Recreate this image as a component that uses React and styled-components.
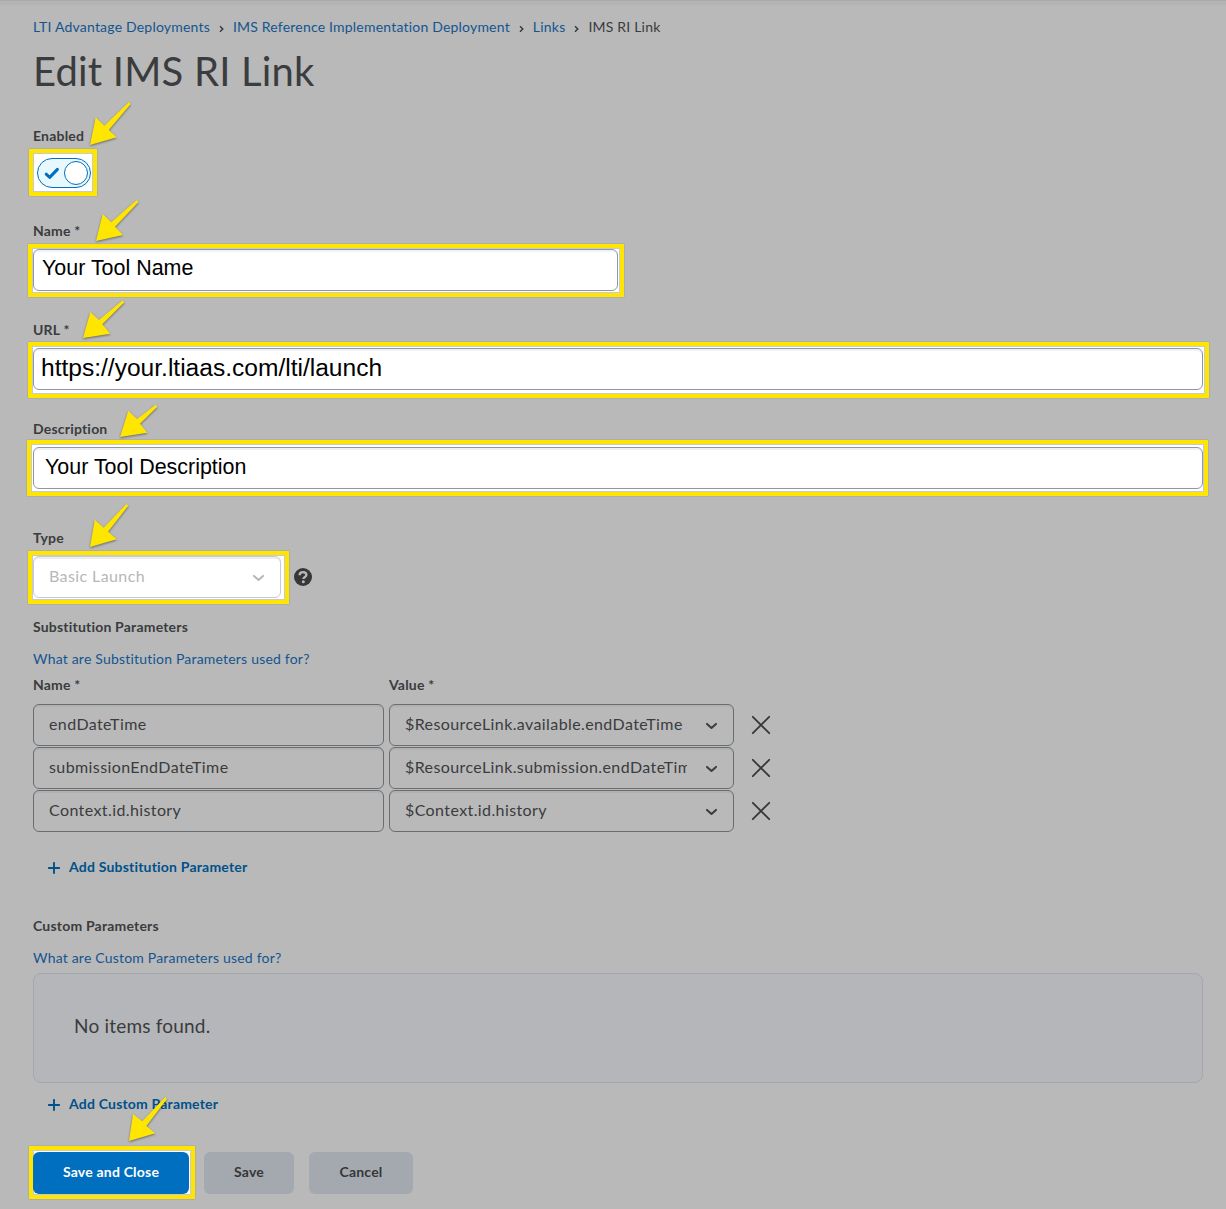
import { useState } from "react";
import styled, { createGlobalStyle } from "styled-components";

const crumbs = ["LTI Advantage Deployments", "IMS Reference Implementation Deployment", "Links"];

const initialParams = [
  { name: "endDateTime", value: "$ResourceLink.available.endDateTime" },
  { name: "submissionEndDateTime", value: "$ResourceLink.submission.endDateTime" },
  { name: "Context.id.history", value: "$Context.id.history" },
];

// arrow outlines, drawn from the tip at 0,0
const arrows = {
  enabled: "0,0 5.7,-27.7 14.3,-19.3 39,-43 40.7,-41 18.7,-15 26.7,-7.7",
  name: "0,0 6.7,-27 15.3,-18.7 40.7,-41 42.3,-38.7 19,-14.3 27,-6",
  url: "0,0 7.3,-26 16,-18 39.7,-37.7 41.3,-35.7 19.3,-13.7 27.3,-4.3",
  description: "0,0 8.3,-26.3 17,-18 35.7,-32.3 37.3,-30.3 20,-13.3 27.3,-4.3",
  type: "0,0 4.7,-27.3 13.7,-19.3 36.3,-43 38.3,-41.3 18,-15.3 26.7,-7.7",
  save: "0,0 4,-27 13.3,-19.7 36.3,-44 38,-42 17.3,-15 26.3,-7.7",
};

const Chevron = () => (
  <svg width="13" height="8" viewBox="0 0 13 8" fill="none" stroke="currentColor">
    <path d="M2 1.900 6.500 6l4.500-4.100" strokeWidth="2" strokeLinecap="round" strokeLinejoin="round" />
  </svg>
);

const Plus = () => (
  <svg width="12" height="12" viewBox="0 0 12 12" fill="none" stroke="currentColor">
    <path d="M6 .9v10.200M.9 6h10.200" strokeWidth="1.900" strokeLinecap="round" />
  </svg>
);

const Highlight = ({ arrow, tip, frame, children }) => (
  <Spotlight>
    <Frame $inset={frame} />
    <Content>{children}</Content>
    <Arrow $tip={tip} width="44" height="46" viewBox="0 -46 44 46">
      <polygon points={arrows[arrow]} fill="#ffe600" />
    </Arrow>
  </Spotlight>
);

const App = () => {
  const [params, setParams] = useState(initialParams);

  const removeParam = (name) => setParams(params.filter((p) => p.name !== name));

  return (
    <>
      <GlobalStyle />
      <Page>
        <Breadcrumbs>
          {crumbs.map((crumb) => (
            <Crumb key={crumb}>
              <Link>{crumb}</Link>
              <svg width="5" height="8" viewBox="0 0 5 8" fill="none" stroke="#353738">
                <path d="M1 1.300 3.800 4 1 6.700" strokeWidth="1.400" />
              </svg>
            </Crumb>
          ))}
          <span>IMS RI Link</span>
        </Breadcrumbs>
        <Title>Edit IMS RI Link</Title>

        <Field $top={33} $gap={13} $width={58} $indent={4}>
          <Label>Enabled</Label>
          <Highlight arrow="enabled" tip={[53.3, -12.7]} frame="-9px -6px -8px -8px">
            <Toggle>
              <svg width="16" height="13" viewBox="0 0 16 13" fill="none" stroke="#006fbf">
                <path d="M2.200 7.200 5.700 10.400 13.400 2.400" strokeWidth="3" strokeLinecap="round" strokeLinejoin="round" />
              </svg>
              <Knob />
            </Toggle>
          </Highlight>
        </Field>

        <Field $top={34} $gap={9} $width={585}>
          <Label>Name *</Label>
          <Highlight arrow="name" tip={[63.3, -7.7]} frame="-5px -6px -6px -5px">
            <TextBox $size={21.45} $pad={8} $lift={3}>Your Tool Name</TextBox>
          </Highlight>
        </Field>

        <Field $top={30} $gap={9}>
          <Label>URL *</Label>
          <Highlight arrow="url" tip={[50.3, -10]} frame="-6px -6px -8px -5px">
            <TextBox $size={24.55} $pad={7} $lift={3}>https://your.ltiaas.com/lti/launch</TextBox>
          </Highlight>
        </Field>

        <Field $top={30} $gap={9}>
          <Label>Description</Label>
          <Highlight arrow="description" tip={[86.7, -10.3]} frame="-7px -5px -7px -6px">
            <TextBox $size={21.45} $pad={11} $lift={1}>Your Tool Description</TextBox>
          </Highlight>
        </Field>

        <Field $top={40} $gap={9}>
          <Label>Type</Label>
          <TypeRow>
            <Highlight arrow="type" tip={[57.3, -9.3]} frame="-5px -8px -6px -5px">
              <Select $disabled $width={248}>
                <SelectText>Basic Launch</SelectText>
                <Chevron />
              </Select>
            </Highlight>
            <svg width="18" height="18" viewBox="0 0 18 18" fill="none">
              <circle cx="9" cy="9" r="9" fill="#353738" />
              <path d="M5.600 7.300c0-1.900 1.400-3.100 3.400-3.100s3.400 1.100 3.400 2.800c0 2.100-3 2-3 4.100" stroke="#b9b9b9" strokeWidth="2.300" />
              <circle cx="9.300" cy="13.700" r="1.500" fill="#b9b9b9" />
            </svg>
          </TypeRow>
        </Field>

        <Section $top={20}>
          <Label>Substitution Parameters</Label>
          <HelpLink>What are Substitution Parameters used for?</HelpLink>
          <ParamHeader>
            <Label>Name *</Label>
            <Label>Value *</Label>
          </ParamHeader>
          <ParamList>
            {params.map((param) => (
              <ParamRow key={param.name}>
                <ParamName>{param.name}</ParamName>
                <Select $width={345}>
                  <SelectText>{param.value}</SelectText>
                  <Chevron />
                </Select>
                <RemoveButton onClick={() => removeParam(param.name)}>
                  <svg width="20" height="20" viewBox="0 0 20 20" fill="none" stroke="#353738">
                    <path d="M1.800 1.800l16.400 16.400M18.200 1.800l-16.400 16.400" strokeWidth="1.800" strokeLinecap="round" />
                  </svg>
                </RemoveButton>
              </ParamRow>
            ))}
          </ParamList>
          <AddButton $top={24}>
            <Plus />
            Add Substitution Parameter
          </AddButton>
        </Section>

        <Section $top={39}>
          <Label>Custom Parameters</Label>
          <HelpLink>What are Custom Parameters used for?</HelpLink>
          <EmptyBox>No items found.</EmptyBox>
          <AddButton $top={10}>
            <Plus />
            Add Custom Parameter
          </AddButton>
        </Section>

        <Footer>
          <Highlight arrow="save" tip={[96.3, -11]} frame="-6px -6px -5px -4px">
            <Button $primary $width={156}>Save and Close</Button>
          </Highlight>
          <Button $width={90}>Save</Button>
          <Button $width={104}>Cancel</Button>
        </Footer>
      </Page>
    </>
  );
};

export default App;

const GlobalStyle = createGlobalStyle`
  * {
    box-sizing: border-box;
  }

  body {
    margin: 0;
    background: #b9b9b9;
    color: #3a3c3e;
    font-family: Lato, "Liberation Sans", sans-serif;
    font-size: 14px;
  }

  svg {
    flex-shrink: 0;
  }
`;

const Page = styled.main`
  min-height: 1209px;
  padding: 15px 23px 0 33px;
  border-top: 1px solid #a9a9a9;
  background: linear-gradient(#b4b4b4 4px, #b9b9b9 4px);
`;

const Breadcrumbs = styled.nav`
  display: flex;
  line-height: 22px;
  letter-spacing: 0.2px;
`;

const Crumb = styled.span`
  display: flex;
  align-items: center;

  svg {
    margin: 3px 9px 0;
  }
`;

const Link = styled.a`
  color: #14558f;
  cursor: pointer;
`;

const Title = styled.h1`
  height: 48px;
  margin: 8px 0 0;
  font-size: 40px;
  font-weight: 400;
  line-height: 50px;
  letter-spacing: 0.2px;
`;

const Field = styled.div`
  display: flex;
  flex-direction: column;
  gap: ${({ $gap }) => $gap}px;
  margin-top: ${({ $top }) => $top}px;
  width: ${({ $width }) => ($width ? `${$width}px` : "auto")};

  > div {
    margin-left: ${({ $indent }) => $indent || 0}px;
  }
`;

const Label = styled.span`
  font-weight: 700;
  line-height: 18px;
  letter-spacing: 0.2px;
`;

const Spotlight = styled.div`
  position: relative;
`;

const Frame = styled.div`
  position: absolute;
  inset: ${({ $inset }) => $inset};
  border: 4px solid #ffe600;
  background: #fff;
  box-shadow: inset 0 0 0 1px #c9c9d2, 0 0 1px rgba(0, 0, 0, 0.35);
`;

const Content = styled.div`
  position: relative;
`;

const Arrow = styled.svg`
  position: absolute;
  left: ${({ $tip }) => $tip[0]}px;
  top: ${({ $tip }) => $tip[1] - 46}px;
  overflow: visible;
  filter: drop-shadow(0 1px 1px rgba(0, 0, 0, 0.45));
`;

const Toggle = styled.div`
  display: flex;
  align-items: center;
  justify-content: space-between;
  width: 54px;
  height: 30px;
  padding: 0 2px 0 6px;
  border: 1px solid #006fbf;
  border-radius: 15px;
  background: #e8f8ff;
`;

const Knob = styled.span`
  width: 24px;
  height: 24px;
  border: 1px solid #006fbf;
  border-radius: 50%;
  background: #fff;
`;

const TextBox = styled.div`
  height: 42px;
  padding: 0 ${({ $pad }) => $pad}px ${({ $lift }) => $lift}px;
  border: 1px solid #90989d;
  border-radius: 6px;
  background: #fff;
  box-shadow: inset 0 2px 0 rgba(181, 189, 194, 0.2);
  color: #000;
  font-family: "Liberation Sans", Arial, sans-serif;
  font-size: ${({ $size }) => $size}px;
  line-height: ${({ $lift }) => 40 - $lift}px;
`;

const TypeRow = styled.div`
  display: flex;
  align-items: center;
  gap: 13px;
`;

const Select = styled.div`
  display: flex;
  align-items: center;
  justify-content: space-between;
  width: ${({ $width }) => $width}px;
  height: 42px;
  padding: 0 15px;
  border: 1px solid ${({ $disabled }) => ($disabled ? "#c7cbce" : "#686e72")};
  border-radius: 6px;
  color: ${({ $disabled }) => ($disabled ? "#b6b7b8" : "#3a3c3e")};
  font-size: 16px;
  letter-spacing: 0.4px;
  box-shadow: inset 0 2px 0 rgba(131, 137, 141, 0.15);

  svg {
    margin-top: 2px;
  }
`;

const SelectText = styled.span`
  max-width: 282px;
  padding-bottom: 3px;
  overflow: hidden;
  white-space: nowrap;
`;

const Section = styled.section`
  display: flex;
  flex-direction: column;
  margin-top: ${({ $top }) => $top}px;
`;

const HelpLink = styled(Link)`
  margin-top: 12px;
  line-height: 22px;
  letter-spacing: 0.2px;
`;

const ParamHeader = styled.div`
  display: grid;
  grid-template-columns: 351px 345px;
  gap: 5px;
  margin-top: 6px;
`;

const ParamList = styled.div`
  display: flex;
  flex-direction: column;
  gap: 1px;
  margin-top: 10px;
`;

const ParamRow = styled.div`
  display: flex;
  align-items: center;
  gap: 5px;
`;

const ParamName = styled.div`
  width: 351px;
  height: 42px;
  padding: 0 15px;
  border: 1px solid #686e72;
  border-radius: 6px;
  box-shadow: inset 0 2px 0 rgba(131, 137, 141, 0.15);
  font-size: 16px;
  line-height: 38px;
  letter-spacing: 0.4px;
`;

const RemoveButton = styled.button`
  display: flex;
  margin-left: 12px;
  padding: 0;
  border: none;
  background: none;
  cursor: pointer;
`;

const AddButton = styled.button`
  display: flex;
  align-items: center;
  gap: 9px;
  margin: ${({ $top }) => $top}px 0 0 15px;
  padding: 0;
  border: none;
  background: none;
  color: #00518b;
  font: 700 14px/22px Lato, sans-serif;
  letter-spacing: 0.2px;
  cursor: pointer;

  svg {
    margin-top: 2px;
  }
`;

const EmptyBox = styled.div`
  height: 110px;
  margin-top: 4px;
  padding: 0 40px;
  border: 1px solid #a3a8af;
  border-radius: 8px;
  background: #b4b6b9;
  font-size: 19px;
  line-height: 104px;
  letter-spacing: 0.2px;
`;

const Footer = styled.div`
  display: flex;
  gap: 15px;
  margin-top: 37px;
`;

const Button = styled.button`
  display: block;
  width: ${({ $width }) => $width}px;
  height: 42px;
  padding: 0 0 2px;
  border: none;
  border-radius: 6px;
  background: ${({ $primary }) => ($primary ? "#006fbf" : "#a4a9af")};
  color: ${({ $primary }) => ($primary ? "#fff" : "#353738")};
  font: 700 14px/20px Lato, sans-serif;
  letter-spacing: 0.2px;
  cursor: pointer;
`;
